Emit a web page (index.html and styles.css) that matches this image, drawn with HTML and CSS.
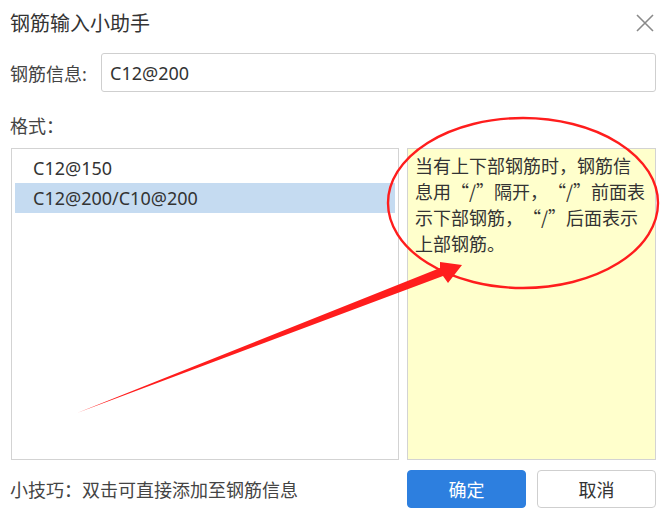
FILE: index.html
```html
<!DOCTYPE html>
<html lang="zh-CN">
<head>
    <meta charset="UTF-8">
    <meta name="viewport" content="width=device-width, initial-scale=1.0">
    <title>钢筋输入小助手</title>
    <link rel="stylesheet" href="styles.css">
</head>
<body>

    <div class="dialog">
        <div class="dialog-header">
            <span class="dialog-title">钢筋输入小助手</span>
            <svg class="close-btn" width="18" height="18" viewBox="0 0 18 18">
                <path d="M1 1 L17 17 M17 1 L1 17" stroke="#8a8a8a" stroke-width="1.6" fill="none"/>
            </svg>
        </div>

        <div class="field-row">
            <label class="field-label" for="rebar">钢筋信息:</label>
            <input type="text" id="rebar" class="field-input" value="C12@200">
        </div>

        <div class="section-label">格式：</div>

        <div class="panels">
            <ul class="format-list">
                <li>C12@150</li>
                <li class="selected">C12@200/C10@200</li>
            </ul>
            <div class="hint-box">当有上下部钢筋时，钢筋信<br>息用“/”隔开，“/”前面表<br>示下部钢筋，“/”后面表示<br>上部钢筋。</div>
        </div>

        <div class="dialog-footer">
            <span class="tip">小技巧：双击可直接添加至钢筋信息</span>
            <div class="buttons">
                <button class="btn btn-primary">确定</button>
                <button class="btn">取消</button>
            </div>
        </div>

        <!-- red markup drawn on top of the dialog -->
        <svg class="markup" width="664" height="520" viewBox="0 0 664 520">
            <ellipse cx="523" cy="203" rx="135" ry="85" fill="none" stroke="#ff1d1d" stroke-width="2.4"/>
            <polygon points="77,413 443,276 448,283 462,265 440,262 440,268" fill="#ff1d1d"/>
        </svg>
    </div>

</body>
</html>
```

FILE: styles.css
```css
body {
    margin: 0;
    padding: 0;
    background-color: #ffffff;
}

.dialog {
    position: relative;
    width: 664px;
    height: 520px;
    font-family: "Noto Sans", "Noto Sans CJK SC", sans-serif;
    font-size: 18px;
    color: #333333;
    box-sizing: border-box;
}

.dialog-header {
    display: flex;
    justify-content: space-between;
    align-items: center;
    height: 44px;
    padding: 0 10px;
}

.dialog-title {
    font-family: "Noto Sans CJK SC", sans-serif;
    font-size: 20px;
    color: #333333;
}

.close-btn {
    margin-top: 2px;
}

.field-row {
    display: flex;
    align-items: center;
    margin-top: 9px;
    padding: 0 8px 0 10px;
}

.field-label {
    width: 91px;
    flex: none;
    color: #444444;
}

.field-input {
    flex: 1;
    height: 39px;
    padding: 0 8px;
    border: 1px solid #cfcfcf;
    border-radius: 3px;
    font-family: inherit;
    font-size: 18px;
    color: #333333;
    box-sizing: border-box;
}

.section-label {
    margin-top: 24px;
    padding-left: 10px;
    line-height: 20px;
    color: #444444;
}

.panels {
    display: flex;
    gap: 8px;
    margin-top: 12px;
    padding: 0 8px 0 11px;
    height: 312px;
}

.format-list {
    list-style: none;
    width: 388px;
    margin: 0;
    padding: 4px 3px;
    border: 1px solid #d3d3d3;
    box-sizing: border-box;
}

.format-list li {
    height: 30px;
    line-height: 30px;
    padding-left: 18px;
    color: #333333;
}

.format-list li.selected {
    background-color: #c5dbf1;
}

.hint-box {
    flex: 1;
    padding: 3px 2px 0 7px;
    background-color: #ffffcc;
    border: 1px solid #d3d3d3;
    box-sizing: border-box;
    font-family: "Noto Sans CJK SC", sans-serif;
    line-height: 26px;
    color: #333333;
    white-space: nowrap;
    text-spacing-trim: space-all;
}

.dialog-footer {
    display: flex;
    justify-content: space-between;
    align-items: center;
    margin-top: 10px;
    padding: 0 8px 0 10px;
}

.tip {
    color: #444444;
}

.buttons {
    display: flex;
    gap: 11px;
}

.btn {
    width: 119px;
    height: 38px;
    border: 1px solid #cfcfcf;
    border-radius: 4px;
    background-color: #ffffff;
    font-family: "Noto Sans CJK SC", sans-serif;
    font-size: 18px;
    color: #333333;
    cursor: pointer;
}

.btn-primary {
    background-color: #2d7fdf;
    border-color: #2d7fdf;
    color: #ffffff;
}

.markup {
    position: absolute;
    top: 0;
    left: 0;
    pointer-events: none;
}
```
